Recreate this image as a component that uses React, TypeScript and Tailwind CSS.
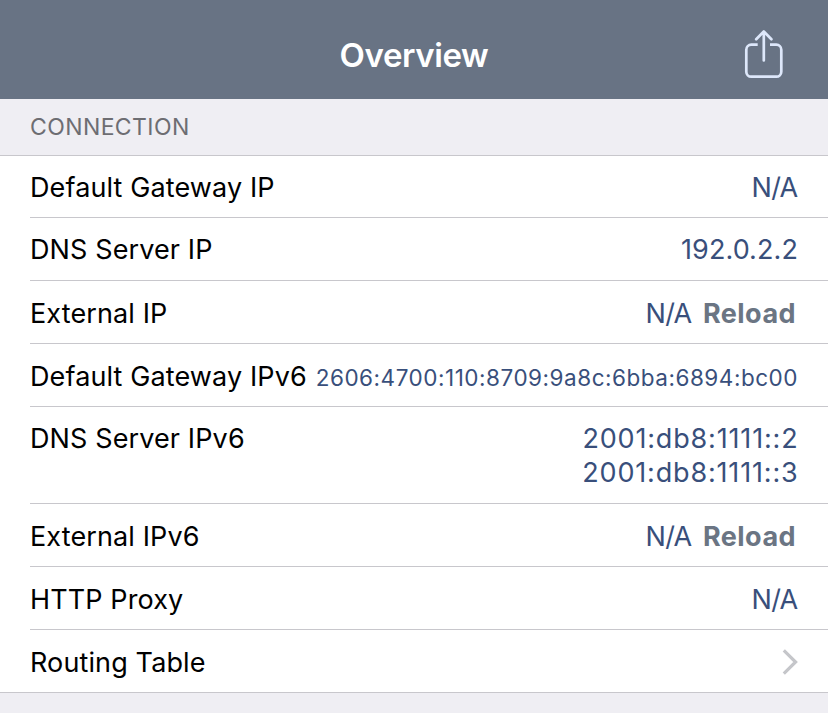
import type { ReactNode } from 'react';

type RowProps = {
  label: string;
  height: string;
  pad?: string;
  last?: boolean;
  children: ReactNode;
};

function Row({ label, height, pad = 'pt-[15px]', last = false, children }: RowProps) {
  return (
    <div className="bg-white pl-[30px]">
      <div className={`flex items-start justify-between pr-[30px] ${height} ${pad} ${last ? '' : 'border-b border-[#c8c7cc]'}`}>
        <span className="whitespace-nowrap text-[27px] leading-[34px] tracking-[0.12px] text-black">{label}</span>
        {children}
      </div>
    </div>
  );
}

const value = 'text-[27px] leading-[34px] text-[#394f7b] text-right whitespace-nowrap';

function NotAvailable() {
  return <span className={`${value} mr-[0.5px] tracking-[-0.7px]`}>N/A</span>;
}

function Reloadable() {
  return (
    <div className="flex gap-[11px] pr-[2px]">
      <NotAvailable />
      <button className="text-[27px] font-bold leading-[34px] tracking-[0.45px] text-[#6b7583]">Reload</button>
    </div>
  );
}

export default function App() {
  return (
    <div className="h-[713px] w-[828px] overflow-hidden bg-[#efeef3] font-['Inter','Liberation_Sans',sans-serif] font-[380]">
      <header className="relative flex h-[99px] items-center justify-center bg-[#687384] pt-[11px]">
        <h1 className="text-[33px] font-[560] leading-[40px] tracking-[-0.4px] text-white">Overview</h1>
        <svg
          className="absolute left-[744px] top-[29px]"
          width="40"
          height="50"
          viewBox="0 0 40 50"
          fill="none"
          stroke="#dde7fa"
          strokeWidth="2.7"
          strokeLinejoin="round"
        >
          <path d="M13.7 15.7H7.3a5 5 0 0 0-5 5v22a5 5 0 0 0 5 5h25a5 5 0 0 0 5-5v-22a5 5 0 0 0-5-5H26" />
          <path d="M19.8 31.5V2.5M12.2 10.2l7.6-7.7 7.6 7.7" strokeLinecap="round" />
        </svg>
      </header>
      <h2 className="h-[57px] border-b border-[#c8c7cc] pl-[30px] pt-[12px] text-[23px] leading-[32px] tracking-[0.4px] text-[#6d6d72]">
        CONNECTION
      </h2>
      <Row label="Default Gateway IP" height="h-[62px]"><NotAvailable /></Row>
      <Row label="DNS Server IP" height="h-[63px]">
        <span className={`${value} tracking-[0.1px]`}>192.0.2.2</span>
      </Row>
      <Row label="External IP" height="h-[63px]" pad="pt-[16px]"><Reloadable /></Row>
      <Row label="Default Gateway IPv6" height="h-[63px]" pad="pt-[16px]">
        <span className="whitespace-nowrap text-[22.5px] leading-[35px] tracking-[0.52px] text-[#394f7b]">
          2606:4700:110:8709:9a8c:6bba:6894:bc00
        </span>
      </Row>
      <Row label="DNS Server IPv6" height="h-[97px]">
        <span className={`${value} -mr-[0.5px] tracking-[0.83px]`}>
          2001:db8:1111::2
          <br />
          2001:db8:1111::3
        </span>
      </Row>
      <Row label="External IPv6" height="h-[63px]" pad="pt-[16px]"><Reloadable /></Row>
      <Row label="HTTP Proxy" height="h-[63px]" pad="pt-[16px]"><NotAvailable /></Row>
      <Row label="Routing Table" height="h-[62px]" pad="pt-[16px]" last>
        <svg className="mt-[2px]" width="16" height="28" viewBox="0 0 16 28" fill="none" stroke="#c5c6ca" strokeWidth="3.2">
          <path d="M1.8 2.4 13.6 14 1.8 25.6" />
        </svg>
      </Row>
      <div className="border-t border-[#c8c7cc]" />
    </div>
  );
}
